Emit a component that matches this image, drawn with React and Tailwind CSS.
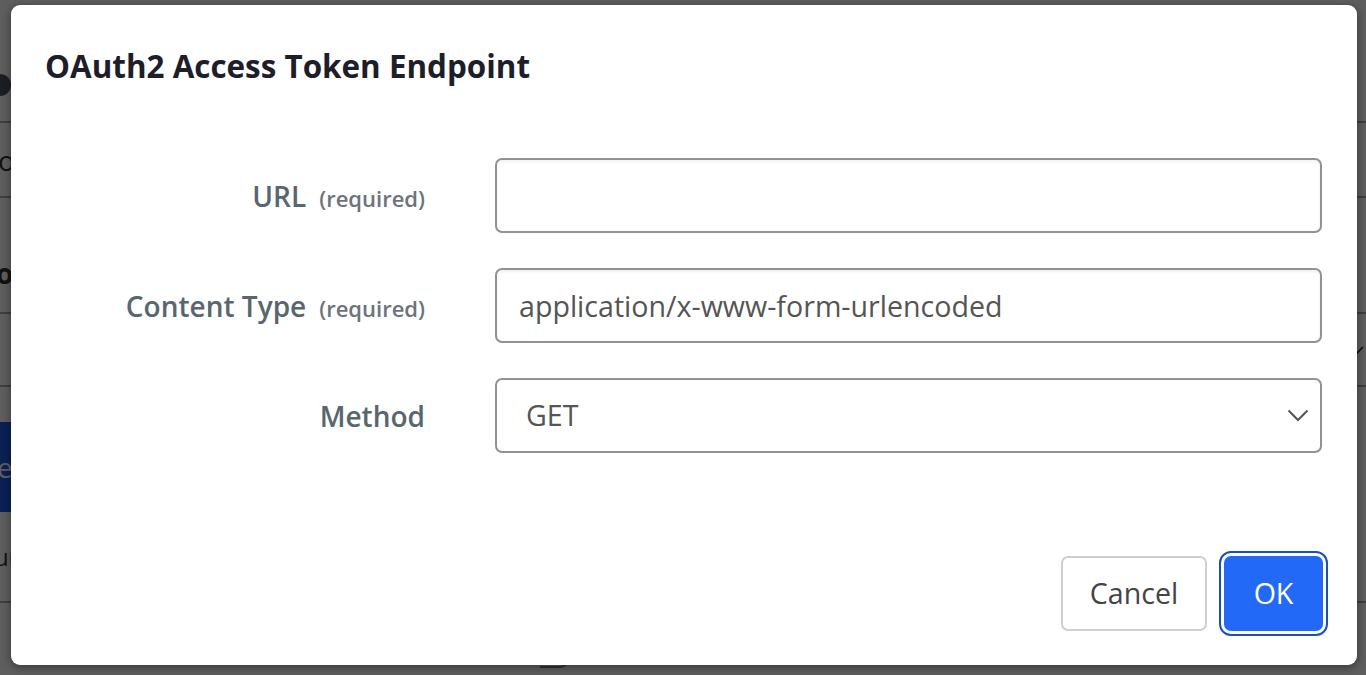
import React from "react";

function BackgroundPage() {
  return (
    <div className="flex h-full w-full flex-col text-[28px] text-[#333]">
      <div className="flex h-[121px] items-end pb-[25px]">
        <div className="-ml-[11px] h-[22px] w-[22px] rounded-full bg-[#4a5560]" />
      </div>
      <div className="flex h-[75px] items-center border-t-2 border-[#aaa]">
        <span className="-ml-[2px]">oauth</span>
      </div>
      <div className="flex h-[116px] items-end border-t-2 border-[#aaa] pb-[18px]">
        <span className="-ml-[4px] font-bold">ordering</span>
      </div>
      <div className="flex h-[75px] items-center justify-end border-y-2 border-[#aaa] pr-[2px]">
        <svg width="14" height="10" viewBox="0 0 14 10" fill="none" stroke="#222" strokeWidth="1.6">
          <path d="M1 2 L7 8 L13 2" />
        </svg>
      </div>
      <div className="h-[35px]" />
      <div className="flex h-[90px] w-[120px] items-center bg-[#1f5ae5] text-white">
        <span className="-ml-[3px]">ex</span>
      </div>
      <div className="flex h-[91px] items-center border-b-2 border-[#aaa]">
        <span className="-ml-[6px] text-[24px]">uu</span>
      </div>
      <div className="flex flex-1 pl-[540px]">
        <div className="mt-[45px] h-[20px] w-[28px] rounded-br-[8px] border-r-2 border-b-2 border-[#888]" />
      </div>
    </div>
  );
}

function Field({ label, required, children }) {
  return (
    <div className="flex h-[75px] items-center gap-[70px]">
      <div className="flex w-[379px] items-baseline justify-end gap-[13px] text-[#59666f]">
        <span className="text-[28px] font-semibold">{label}</span>
        {required && <span className="text-[22px] font-semibold text-[#6c737a]">(required)</span>}
      </div>
      <div className="h-full flex-1">{children}</div>
    </div>
  );
}

export default function App() {
  return (
    <div className="relative h-[675px] w-[1366px] overflow-hidden bg-white font-['Open_Sans',sans-serif]">
      <BackgroundPage />
      <div className="absolute inset-0 bg-black/[0.63]" />

      <div className="absolute left-[11px] top-[5px] flex h-[660px] w-[1346px] flex-col rounded-[9px] bg-white px-[35px] shadow-[0_2px_10px_rgba(0,0,0,0.45)]">
        <h1 className="-ml-[1px] mt-[40px] text-[31.4px] font-bold leading-[42px] text-[#1d1d2b]">OAuth2 Access Token Endpoint</h1>

        <div className="mt-[71px] flex flex-col gap-[35px]">
          <Field label="URL" required>
            <input
              className="h-full w-full rounded-[7px] border-2 border-[#929292] px-[22px] text-[28.6px] text-[#555] shadow-[inset_0_2px_3px_rgba(0,0,0,0.06)] outline-none"
              defaultValue=""
            />
          </Field>
          <Field label="Content Type" required>
            <input
              className="h-full w-full rounded-[7px] border-2 border-[#929292] px-[22px] text-[28.6px] text-[#555] shadow-[inset_0_2px_3px_rgba(0,0,0,0.06)] outline-none"
              defaultValue="application/x-www-form-urlencoded"
            />
          </Field>
          <Field label="Method">
            <div className="flex h-full w-full items-center justify-between rounded-[7px] border-2 border-[#929292] pl-[29px] pr-[11px] text-[28.6px] text-[#555]">
              <span>GET</span>
              <svg width="22" height="13" viewBox="0 0 22 13" fill="none" stroke="#555" strokeWidth="2">
                <path d="M1.5 1.5 L11 11 L20.5 1.5" />
              </svg>
            </div>
          </Field>
        </div>

        <div className="mt-auto mb-[34px] flex justify-end gap-[18px]">
          <button className="-mr-[1px] h-[75px] w-[146px] rounded-[7px] border-2 border-[#cfcfcf] bg-white text-[28.6px] text-[#444]">
            Cancel
          </button>
          <button className="-mr-[1px] h-[75px] w-[99px] rounded-[7px] bg-[#2169f6] text-[28.6px] text-white outline-2 outline-offset-[3px] outline-[#1650c2]">
            OK
          </button>
        </div>
      </div>
    </div>
  );
}
